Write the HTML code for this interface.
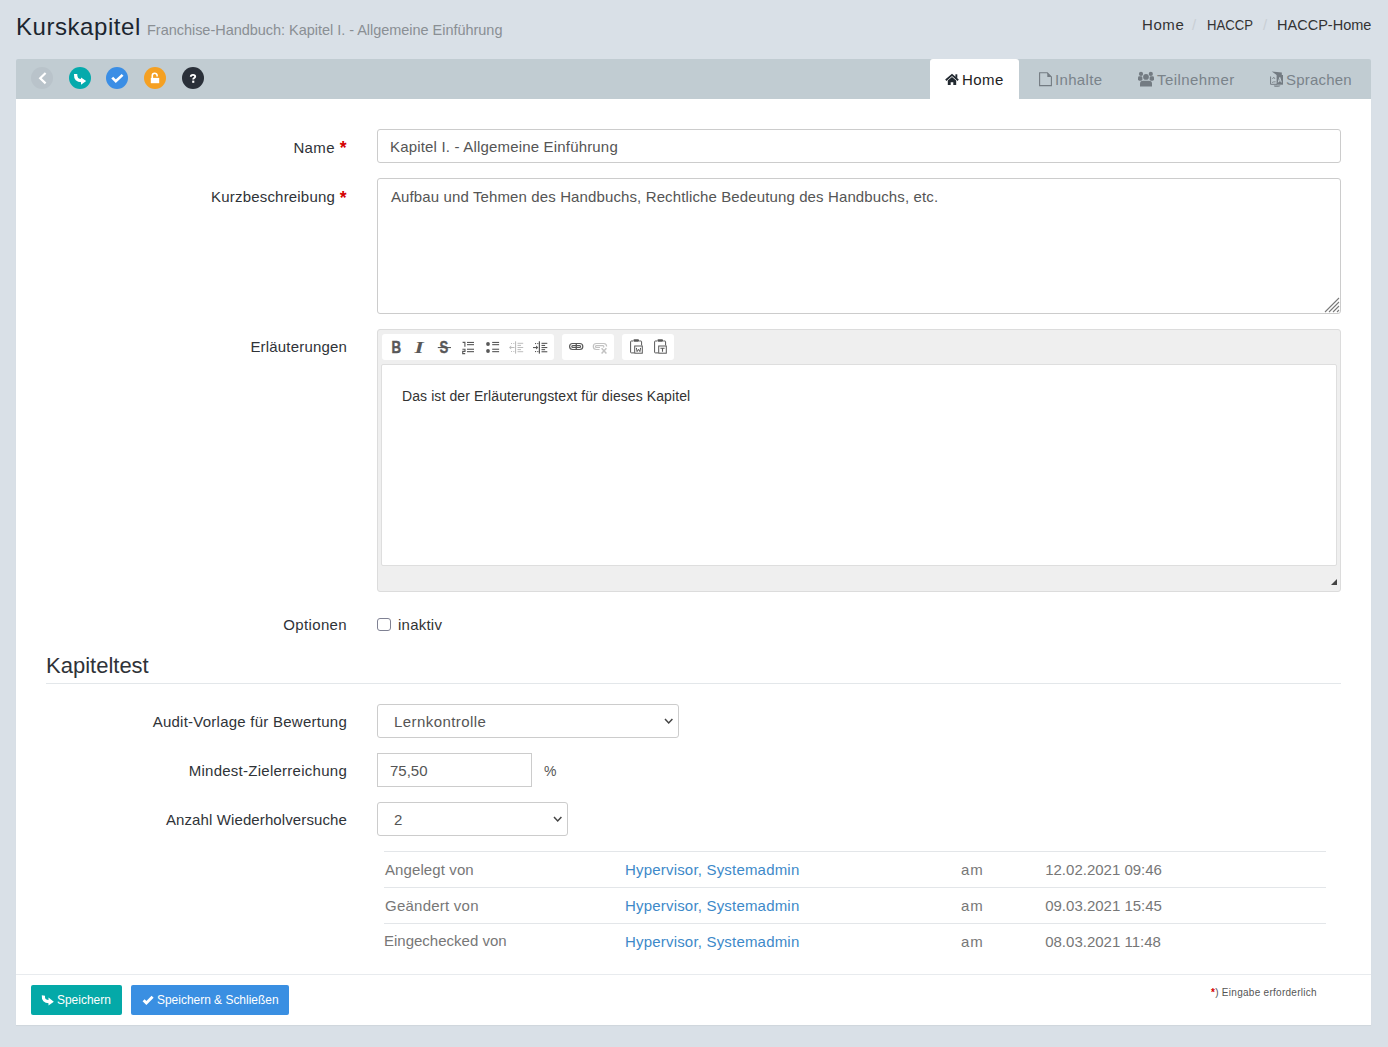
<!DOCTYPE html>
<html><head><meta charset="utf-8">
<style>
*{box-sizing:border-box;margin:0;padding:0}
html,body{width:1388px;height:1047px;overflow:hidden}
body{background:#d9e0e7;font-family:"Liberation Sans",sans-serif;color:#333;position:relative}
.t{position:absolute;white-space:nowrap;line-height:1}
.box{position:absolute}
.lbl{font-size:15px;color:#2f3338;right:1041px;text-align:right}
.req{color:#d40000;font-weight:bold}
.inp{position:absolute;border:1px solid #ccc;border-radius:3px;background:#fff}
.itx{font-size:15px;color:#555}
.td{font-size:15px;color:#777}
.lnk{color:#3d89c9}
.tab{font-size:15px;color:#7a838a}
svg{position:absolute;overflow:visible}
</style></head><body>
<!-- header -->
<div class="t" id="title" style="left:16px;top:15px;font-size:24px;letter-spacing:0.55px;color:#1c2630">Kurskapitel</div>
<div class="t" id="sub" style="left:147px;top:23px;font-size:14.5px;letter-spacing:-0.03px;color:#8a8f94">Franchise-Handbuch: Kapitel I. - Allgemeine Einführung</div>
<div class="t" style="left:1142px;top:17px;font-size:15px;letter-spacing:0.6px;color:#333">Home</div>
<div class="t" style="left:1192px;top:17px;font-size:15px;color:#c9cfd5">/</div>
<div class="t" style="left:1207px;top:17px;font-size:15px;transform-origin:0 0;transform:scaleX(0.875);color:#333">HACCP</div>
<div class="t" style="left:1263px;top:17px;font-size:15px;color:#c9cfd5">/</div>
<div class="t" style="left:1277px;top:17px;font-size:15px;transform-origin:0 0;transform:scaleX(0.968);color:#333">HACCP-Home</div>

<!-- toolbar -->
<div class="box" style="left:16px;top:59px;width:1355px;height:40px;background:#c1ccd2;border-radius:2px 2px 0 0"></div>
<div class="box" style="left:31px;top:67px;width:22px;height:22px;border-radius:50%;background:#b9c3ca"></div>
<svg style="left:31px;top:67px" width="22" height="22"><path d="M13.8 6.8 L9.2 11.2 L13.8 15.6" fill="none" stroke="#fff" stroke-width="2.2" stroke-linecap="square"/></svg>
<div class="box" style="left:69px;top:67px;width:22px;height:22px;border-radius:50%;background:#05aaac"></div>
<svg style="left:69px;top:67px" width="22" height="22"><path d="M6.6 7 C6.4 11.6 8.4 13.6 12.6 13.6" fill="none" stroke="#fff" stroke-width="3.3"/><path d="M12 10.4 L17.2 14 L12 17.8 Z" fill="#fff"/></svg>
<div class="box" style="left:106px;top:67px;width:22px;height:22px;border-radius:50%;background:#3b8ee5"></div>
<svg style="left:106px;top:67px" width="22" height="22"><path d="M7.2 11.6 L9.8 14.2 L15.6 8.8" fill="none" stroke="#fff" stroke-width="2.7" stroke-linecap="square"/></svg>
<div class="box" style="left:144px;top:67px;width:22px;height:22px;border-radius:50%;background:#f5a022"></div>
<svg style="left:144px;top:67px" width="22" height="22"><rect x="6.8" y="10.9" width="8.4" height="5.3" fill="#fff"/><path d="M8.3 11 V8.6 A2.4 2.4 0 0 1 13.1 8.6 V9.6" fill="none" stroke="#fff" stroke-width="1.6"/></svg>
<div class="box" style="left:182px;top:67px;width:22px;height:22px;border-radius:50%;background:#2a3039"></div>
<svg style="left:182px;top:67px" width="22" height="22"><path d="M8.8 9.8 C8.8 8.3 9.8 7.9 11 7.9 C12.3 7.9 13.2 8.6 13.2 9.6 C13.2 11 11.2 11 11.2 12.4" fill="none" stroke="#fff" stroke-width="1.9"/><rect x="10.2" y="13.6" width="2.1" height="2.2" fill="#fff"/></svg>

<!-- tabs -->
<div class="box" style="left:930px;top:59px;width:89px;height:41px;background:#fff;border-radius:3px 3px 0 0"></div>

<div class="t tab" style="left:962px;top:72px;letter-spacing:0.43px;color:#222">Home</div>

<div class="t tab" style="left:1055px;top:72px;letter-spacing:0.33px">Inhalte</div>

<div class="t tab" style="left:1157px;top:72px;letter-spacing:0.43px">Teilnehmer</div>

<div class="t tab" style="left:1286px;top:72px;letter-spacing:0.2px">Sprachen</div>

<!-- panel -->
<div class="box" style="left:16px;top:99px;width:1355px;height:926px;background:#fff;box-shadow:0 1px 1px rgba(0,0,0,0.04)"></div>

<!-- Name -->
<div class="t lbl" style="top:140px;right:1053px;letter-spacing:0.4px">Name</div><div class="t req" style="left:339.7px;top:140px;font-size:17.5px">*</div>
<div class="inp" style="left:377px;top:129px;width:964px;height:34px"></div>
<div class="t itx" style="left:390px;top:139px;letter-spacing:0.18px">Kapitel I. - Allgemeine Einführung</div>

<!-- Kurzbeschreibung -->
<div class="t lbl" style="top:189px;right:1053px;letter-spacing:0.19px">Kurzbeschreibung</div><div class="t req" style="left:339.7px;top:189.5px;font-size:17.5px">*</div>
<div class="inp" style="left:377px;top:178px;width:964px;height:136px"></div>
<div class="t itx" style="left:391px;top:189px;letter-spacing:0.12px">Aufbau und Tehmen des Handbuchs, Rechtliche Bedeutung des Handbuchs, etc.</div>
<svg style="left:1324px;top:297px" width="16" height="16"><path d="M1 15 L15 1 M5 15 L15 5 M9 15 L15 9 M13 15 L15 13" stroke="#7a7a7a" stroke-width="1.1"/></svg>

<!-- Erläuterungen -->
<div class="t lbl" style="top:339px;letter-spacing:0.18px">Erläuterungen</div>
<div class="box" style="left:377px;top:329px;width:964px;height:263px;background:#efefef;border:1px solid #dcdcdc;border-radius:3px"></div>
<div class="box" style="left:382px;top:334px;width:172px;height:26px;background:#fff;border-radius:3px"></div>
<div class="box" style="left:562px;top:334px;width:52px;height:26px;background:#fff;border-radius:3px"></div>
<div class="box" style="left:622px;top:334px;width:52px;height:26px;background:#fff;border-radius:3px"></div>
<div class="box" style="left:381px;top:364px;width:956px;height:202px;background:#fff;border:1px solid #dedede;border-radius:2px"></div>
<div class="t" style="left:402px;top:389px;font-size:14px;letter-spacing:0.09px;color:#333">Das ist der Erläuterungstext für dieses Kapitel</div>
<svg style="left:1330px;top:578px" width="8" height="8"><path d="M7 1 V7 H1 Z" fill="#444"/></svg>

<!-- Optionen -->
<div class="t lbl" style="top:617px;letter-spacing:0.36px">Optionen</div>
<div class="box" style="left:377.2px;top:617.8px;width:13.8px;height:13.2px;border:1.8px solid #7f8193;border-radius:3px;background:#fff"></div>
<div class="t" style="left:398px;top:617px;font-size:15px;letter-spacing:0.23px;color:#333">inaktiv</div>

<!-- Kapiteltest -->
<div class="t" style="left:46px;top:655px;font-size:22px;color:#2f3338">Kapiteltest</div>
<div class="box" style="left:46px;top:683px;width:1295px;height:1px;background:#e3e7ea"></div>

<div class="t lbl" style="top:714px;letter-spacing:0.25px">Audit-Vorlage für Bewertung</div>
<div class="inp" style="left:377px;top:704px;width:302px;height:34px"></div>
<div class="t itx" style="left:394px;top:714px;letter-spacing:0.43px">Lernkontrolle</div>
<svg style="left:664.3px;top:717.6px" width="10" height="7"><path d="M1 1 L4.7 5 L8.4 1" fill="none" stroke="#444" stroke-width="1.5"/></svg>

<div class="t lbl" style="top:763px;letter-spacing:0.26px">Mindest-Zielerreichung</div>
<div class="inp" style="left:377px;top:753px;width:155px;height:34px;border-radius:0"></div>
<div class="t itx" style="left:390px;top:763px">75,50</div>
<div class="t itx" style="left:544px;top:764px;font-size:14px">%</div>

<div class="t lbl" style="top:812px;letter-spacing:0.11px">Anzahl Wiederholversuche</div>
<div class="inp" style="left:377px;top:802px;width:191px;height:34px"></div>
<div class="t itx" style="left:394px;top:812px">2</div>
<svg style="left:553.3px;top:815.6px" width="10" height="7"><path d="M1 1 L4.7 5 L8.4 1" fill="none" stroke="#444" stroke-width="1.5"/></svg>

<!-- table -->
<div class="box" style="left:384px;top:851px;width:942px;height:1px;background:#e3e6e9"></div>
<div class="box" style="left:384px;top:887px;width:942px;height:1px;background:#e3e6e9"></div>
<div class="box" style="left:384px;top:923px;width:942px;height:1px;background:#e3e6e9"></div>
<div class="t td" style="left:385px;top:862px;letter-spacing:0.1px">Angelegt von</div>
<div class="t td lnk" style="left:625px;top:862px;letter-spacing:0.19px">Hypervisor, Systemadmin</div>
<div class="t td" style="letter-spacing:1px;left:961px;top:862px">am</div>
<div class="t td" style="left:1045.2px;top:862px">12.02.2021 09:46</div>
<div class="t td" style="left:385px;top:898px;letter-spacing:0.24px">Geändert von</div>
<div class="t td lnk" style="left:625px;top:898px;letter-spacing:0.19px">Hypervisor, Systemadmin</div>
<div class="t td" style="letter-spacing:1px;left:961px;top:898px">am</div>
<div class="t td" style="left:1045.2px;top:898px">09.03.2021 15:45</div>
<div class="t td" style="left:384px;top:933px">Eingechecked von</div>
<div class="t td lnk" style="left:625px;top:934px;letter-spacing:0.19px">Hypervisor, Systemadmin</div>
<div class="t td" style="letter-spacing:1px;left:961px;top:934px">am</div>
<div class="t td" style="left:1045.2px;top:934px">08.03.2021 11:48</div>

<!-- footer -->
<div class="box" style="left:16px;top:974px;width:1355px;height:1px;background:#e8ebee"></div>
<div class="box" style="left:31px;top:985px;width:91px;height:30px;background:#04a9a8;border-radius:2px"></div>
<svg style="left:41px;top:995px" width="13" height="11"><path d="M2.4 0.5 C2 4.8 4 6.6 8 6.6" fill="none" stroke="#fff" stroke-width="3.2"/><path d="M7.5 2.6 L12.8 6.8 L7.5 10.6 Z" fill="#fff"/></svg>
<div class="t" style="left:57px;top:992.5px;font-size:13.5px;transform-origin:0 0;transform:scaleX(0.885);color:#fff">Speichern</div>
<div class="box" style="left:131px;top:985px;width:158px;height:30px;background:#3a8fe2;border-radius:2px"></div>
<svg style="left:142px;top:995px" width="12" height="10"><path d="M1.6 5.2 L4.4 8 L10.6 1.8" fill="none" stroke="#fff" stroke-width="2.9"/></svg>
<div class="t" style="left:157px;top:992.5px;font-size:13.5px;transform-origin:0 0;transform:scaleX(0.885);color:#fff">Speichern &amp; Schließen</div>
<div class="t" style="left:1211px;top:987.5px;font-size:10px;letter-spacing:0.28px;color:#555"><span class="req">*</span>) Eingabe erforderlich</div>

<!-- editor icons overlay -->
<svg style="left:0;top:0" width="1388" height="1047">
<!-- home/file icons -->
<path d="M945.8 80.2 L952 74.9 L958.2 80.2" fill="none" stroke="#222930" stroke-width="1.9" stroke-linejoin="miter"/>
<rect x="955.4" y="74.3" width="1.9" height="3.6" fill="#222930"/>
<path d="M947.8 80.6 L952 77.1 L956.2 80.6 V85 H953.3 V82.2 H950.7 V85 H947.8 Z" fill="#222930"/>
<path d="M1039.6 72.8 H1047.3 L1051.4 76.9 V85.6 H1039.6 Z" fill="none" stroke="#737b82" stroke-width="1.1"/>
<path d="M1047.3 72.8 V76.9 H1051.4 Z" fill="#737b82"/>
<!-- tab icons -->
<g fill="#737b82">
<circle cx="1141" cy="73.9" r="2.1"/><circle cx="1150.8" cy="73.9" r="2.1"/>
<circle cx="1146" cy="76.9" r="2.9"/>
<rect x="1138" y="76.3" width="4.4" height="4.4" rx="1.4"/>
<rect x="1149.6" y="76.3" width="4.4" height="4.4" rx="1.4"/>
<path d="M1140 86.6 V83.6 Q1140 80.7 1143 80.7 H1149 Q1152 80.7 1152 83.6 V86.6 Z"/>
</g>
<g fill="none" stroke="#737b82" stroke-width="1">
<path d="M1270.6 76.5 V84.3 H1277"/>
</g>
<g fill="#737b82">
<path d="M1271.8 71.6 L1281.8 72.4 V75 H1276.6 Z"/>
<rect x="1276.6" y="75" width="6.4" height="9.7"/>
<path d="M1273.8 85.6 H1280.6 Q1279.8 86.8 1277.6 86.8 H1274.6 Z"/>
</g>
<path d="M1278.2 82.4 L1279.8 77.4 L1281.4 82.4 M1278.7 80.9 H1280.9" fill="none" stroke="#c1ccd2" stroke-width="1"/>
<path d="M1272.4 79 L1273.8 77.2 L1275 79 M1272 82.5 Q1273.6 81.6 1275.6 81.8" fill="none" stroke="#737b82" stroke-width="0.8"/>

<g fill="#585858">
<text x="391.5" y="353" font-family="Liberation Sans" font-weight="bold" font-size="17.4" textLength="9.6" lengthAdjust="spacingAndGlyphs" stroke="#585858" stroke-width="0.5">B</text>
<text x="414.6" y="352.8" font-family="Liberation Serif" font-weight="bold" font-style="italic" font-size="16.5" textLength="9.2" lengthAdjust="spacingAndGlyphs">I</text>
<text x="439.5" y="353" font-family="Liberation Sans" font-weight="bold" font-size="17" textLength="8.8" lengthAdjust="spacingAndGlyphs" stroke="#585858" stroke-width="0.4">S</text>
<rect x="437.8" y="347" width="13.2" height="1.1"/>
<!-- numbered list -->
<path d="M462.6 342.4 H464.9 V346.8" fill="none" stroke="#585858" stroke-width="1.1"/>
<path d="M462.4 349.3 H465 V351.4 H462.7 V353.6 H465.2" fill="none" stroke="#585858" stroke-width="1.1"/>
<rect x="467" y="341.9" width="7" height="1.1"/><rect x="467" y="344.1" width="7" height="1.1"/>
<rect x="467" y="348.7" width="7" height="1.1"/><rect x="467" y="351.1" width="7" height="1.1"/>
<!-- bulleted list -->
<circle cx="488" cy="344" r="1.9"/><circle cx="488" cy="351" r="1.9"/>
<rect x="492.2" y="341.9" width="6.9" height="1.1"/><rect x="492.2" y="344.1" width="6.9" height="1.1"/>
<rect x="492.2" y="348.7" width="6.9" height="1.1"/><rect x="492.2" y="351.1" width="6.9" height="1.1"/>
</g>
<!-- outdent disabled -->
<g fill="#bdbdbd">
<rect x="515" y="341.3" width="1.1" height="12.3"/>
<rect x="511" y="343" width="1" height="1"/><rect x="513.3" y="343" width="1" height="1"/>
<rect x="511" y="351" width="1" height="1"/><rect x="513.3" y="351" width="1" height="1"/>
<rect x="510" y="347" width="4.5" height="1"/><path d="M509 347.5 L511.2 345.6 V349.4 Z"/>
<rect x="517.5" y="342.8" width="5.7" height="1"/><rect x="517.5" y="344.9" width="3.5" height="1"/>
<rect x="517.5" y="347" width="5.7" height="1"/><rect x="517.5" y="349.1" width="3.5" height="1"/>
<rect x="517.5" y="351.2" width="5.7" height="1"/>
</g>
<!-- indent -->
<g fill="#585858">
<rect x="538.8" y="341.3" width="1.2" height="12.3"/>
<rect x="535" y="343" width="1.1" height="1.1"/><rect x="537.3" y="343" width="1.1" height="1.1"/>
<rect x="535" y="351" width="1.1" height="1.1"/><rect x="537.3" y="351" width="1.1" height="1.1"/>
<rect x="533" y="347" width="3.5" height="1.1"/><path d="M538.3 347.5 L536 345.5 V349.5 Z"/>
<rect x="541.5" y="342.8" width="5.8" height="1.1"/><rect x="541.5" y="344.9" width="3.6" height="1.1"/>
<rect x="541.5" y="347" width="5.8" height="1.1"/><rect x="541.5" y="349.1" width="3.6" height="1.1"/>
<rect x="541.5" y="351.2" width="5.8" height="1.1"/>
</g>
<!-- link -->
<g fill="none" stroke="#585858" stroke-width="1.2">
<rect x="569.6" y="343.5" width="13.2" height="6" rx="3"/>
<rect x="571.8" y="345.6" width="8.8" height="1.9" rx="0.95" stroke-width="1.1"/>
</g>
<rect x="575.6" y="343" width="1.3" height="7" fill="#585858"/>
<!-- unlink disabled -->
<g fill="none" stroke="#c2c2c2" stroke-width="1.2">
<path d="M599.5 349.5 H596.3 A3 3 0 0 1 596.3 343.5 H603.8 A3 3 0 0 1 606.6 346.6"/>
<path d="M600 347.5 H596.4 A0.95 0.95 0 0 1 596.4 345.6 H602.8 A1 1 0 0 1 603.4 347.4"/>
<path d="M601.6 348.3 L606.4 353.5 M606.4 348.3 L601.6 353.5" stroke-width="1.5"/>
</g>
<!-- paste from word -->
<g fill="none" stroke="#585858" stroke-width="1">
<path d="M633 341 H631.3 Q630.6 341 630.6 341.8 V352.2 Q630.6 352.9 631.3 352.9 H634.2"/>
<path d="M639.2 341 H640.9 Q641.6 341 641.6 341.8 V345.4"/>
<rect x="634.7" y="346" width="7.6" height="7.2"/>
<path d="M636.4 347.9 L637.1 351.6 L638.5 349.4 L639.9 351.6 L640.6 347.9" stroke-width="1"/>
</g>
<rect x="633.4" y="339.3" width="5.6" height="2.4" rx="1" fill="#585858"/>
<!-- paste text -->
<g fill="none" stroke="#585858" stroke-width="1">
<path d="M657 341 H655.3 Q654.6 341 654.6 341.8 V352.2 Q654.6 352.9 655.3 352.9 H658.2"/>
<path d="M663.2 341 H664.9 Q665.6 341 665.6 341.8 V345.4"/>
<rect x="658.7" y="346" width="7.6" height="7.2"/>
<path d="M660.4 348.2 H664.6 M662.5 348.2 V351.8" stroke-width="1.1"/>
</g>
<rect x="657.4" y="339.3" width="5.6" height="2.4" rx="1" fill="#585858"/>
</svg>
</body></html>
